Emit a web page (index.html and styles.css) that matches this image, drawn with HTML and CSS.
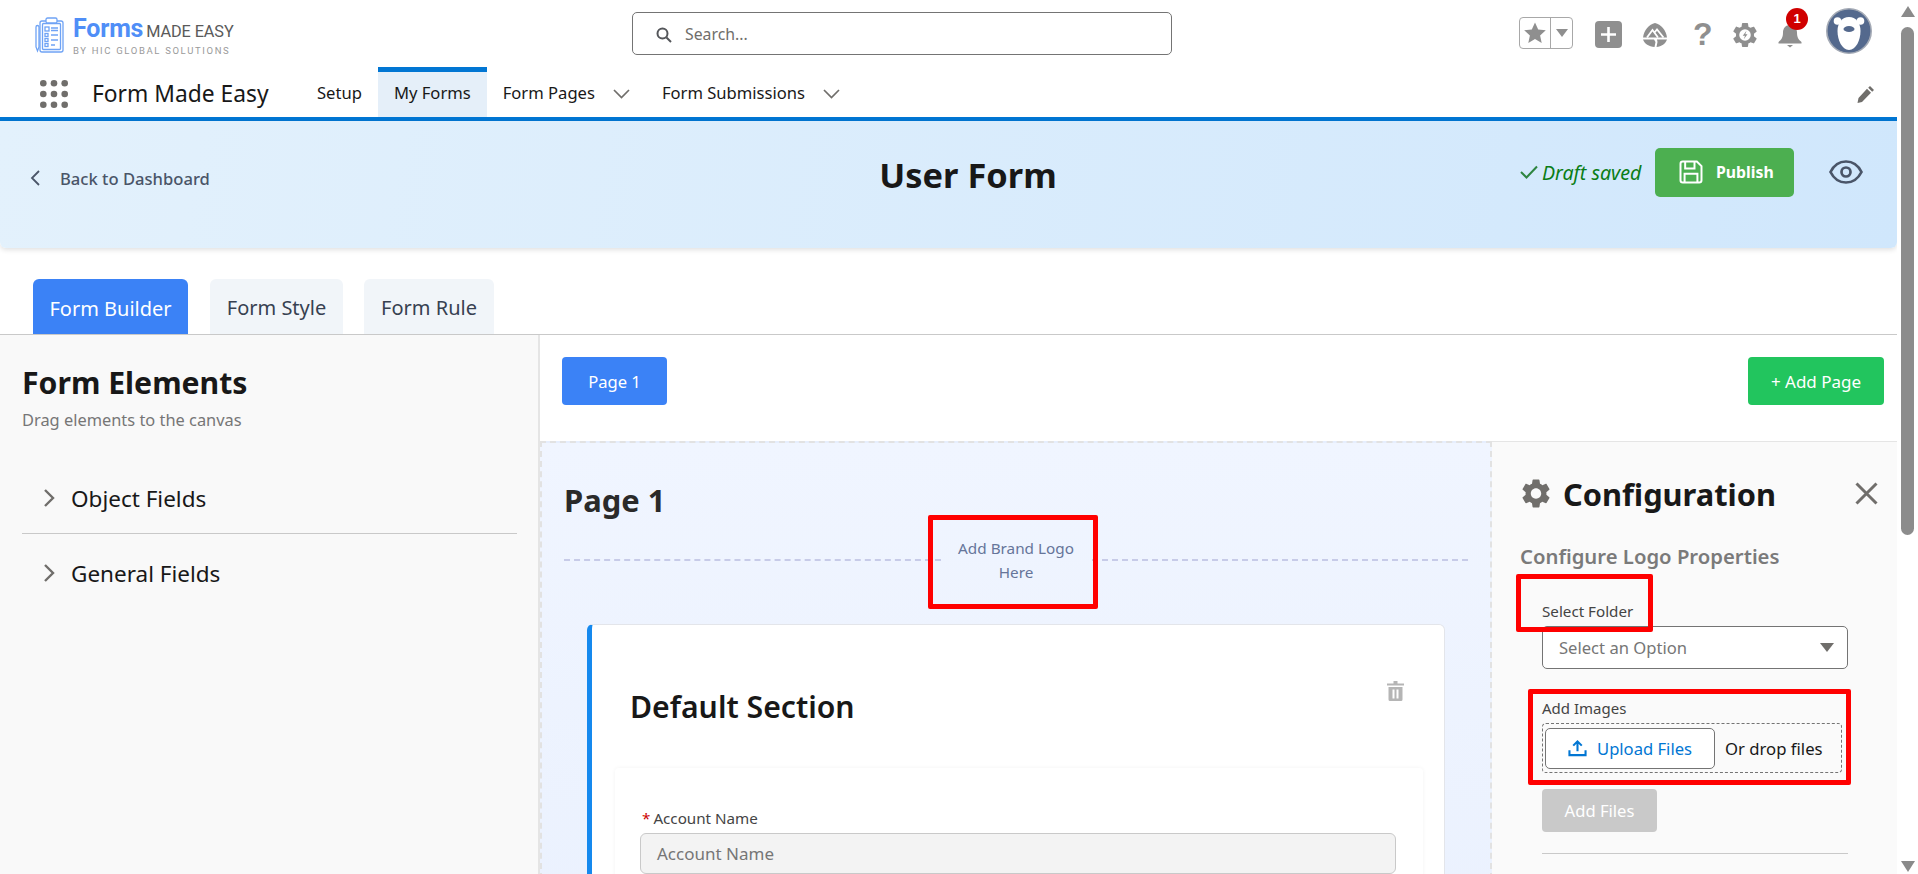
FILE: index.html
```html
<!DOCTYPE html>
<html lang="en">
<head>
<meta charset="utf-8">
<title>User Form</title>
<link rel="stylesheet" href="styles.css">
</head>
<body>
<div class="app">
  <header class="topbar">
    <div class="logo">
      <svg class="logo-icon" viewBox="0 0 30 36" fill="none" stroke="#6fa3f5" stroke-width="1.3">
        <rect x="6" y="4" width="23" height="31" rx="2"/>
        <rect x="8.5" y="6.5" width="18" height="26" rx="1"/>
        <rect x="12" y="1" width="11" height="5" rx="1.5" fill="#fff"/>
        <path d="M2 10v20l1.5 4 1.5-4V10a1.5 1.5 0 0 0-3 0z"/>
        <rect x="11" y="10" width="4" height="4"/><rect x="11" y="16.5" width="3" height="3"/><rect x="11" y="21.5" width="3" height="3"/><rect x="11" y="26.5" width="3" height="3"/>
        <path d="M17 11h7M17 13.5h7M17 18h7M17 23h7M17 28h4"/>
      </svg>
      <div class="logo-text">
        <div class="logo-main"><span class="logo-forms">Forms</span><span class="logo-made">MADE EASY</span></div>
        <div class="logo-by">BY HIC GLOBAL SOLUTIONS</div>
      </div>
    </div>
    <div class="search">
      <svg class="search-icon" viewBox="0 0 16 16" fill="none" stroke="#54565a" stroke-width="2"><circle cx="6.5" cy="6.5" r="5"/><path d="M10.5 10.5 15 15"/></svg>
      <span>Search...</span>
    </div>
    <div class="top-actions">
      <div class="fav">
        <span class="fav-star"><svg viewBox="0 0 24 24" width="24" height="24" fill="#8f8f8f"><path d="M12 1.5l3.2 7 7.6.8-5.7 5.1 1.6 7.6-6.7-3.9-6.7 3.9 1.6-7.6L1.2 9.3l7.6-.8z"/></svg></span>
        <span class="fav-drop"><svg viewBox="0 0 12 8" width="12" height="8" fill="#8f8f8f"><path d="M0 0h12L6 8z"/></svg></span>
      </div>
      <svg class="ic-add" viewBox="0 0 27 27"><rect width="27" height="27" rx="4" fill="#8f8f8f"/><path d="M13.5 6v15M6 13.5h15" stroke="#fff" stroke-width="2.6"/></svg>
      <svg class="ic-trail" viewBox="0 0 26 26" fill="#8f8f8f"><path d="M13 1C19 2.500 24 8 25 15.500H1C2 8 7 2.500 13 1z"/><path d="M1 17.500h11l1.500 2.500-1 5C7 24.500 2.500 22 1 17.500zM15 17.500h10c-1.500 4.500-5.500 7-10.500 7.500l1-5z"/><path d="M5 15.500L10.500 8l5.500 7.500M12.500 10.500L15 7.500l6.500 8" fill="none" stroke="#fff" stroke-width="1.800"/></svg>
      <span class="ic-help">?</span>
      <svg class="ic-gear" viewBox="0 0 24 24"><path fill="#8f8f8f" d="M19.14 12.94c.04-.3.06-.61.06-.94 0-.32-.02-.64-.07-.94l2.03-1.58c.18-.14.23-.41.12-.61l-1.92-3.32c-.12-.22-.37-.29-.59-.22l-2.39.96c-.5-.38-1.03-.7-1.62-.94l-.36-2.54c-.04-.24-.24-.41-.48-.41h-3.84c-.24 0-.43.17-.47.41l-.36 2.54c-.59.24-1.13.57-1.62.94l-2.39-.96c-.22-.08-.47 0-.59.22L2.74 8.87c-.12.21-.08.47.12.61l2.03 1.58c-.05.3-.09.63-.09.94s.02.64.07.94l-2.03 1.58c-.18.14-.23.41-.12.61l1.92 3.32c.12.22.37.29.59.22l2.39-.96c.5.38 1.03.7 1.62.94l.36 2.54c.05.24.24.41.48.41h3.84c.24 0 .44-.17.47-.41l.36-2.54c.59-.24 1.13-.56 1.62-.94l2.39.96c.22.08.47 0 .59-.22l1.92-3.32c.12-.22.07-.47-.12-.61l-2.01-1.58z"/><circle cx="12" cy="12" r="4.6" fill="#fff"/><path d="M13.2 8.6l-3 4h1.8l-1 2.8 3-4h-1.8z" fill="#8f8f8f"/></svg>
      <div class="bell">
        <svg viewBox="0 0 26 26" width="26" height="26" fill="#8f8f8f"><path d="M13 3c-4.5 0-7 3.5-7 7.5 0 5-1.5 7-4.5 9.500v1.500h23V20c-3-2.500-4.500-4.500-4.500-9.500C20 6.500 17.500 3 13 3z"/><path d="M10 23h6l-3 2.500z"/></svg>
        <span class="badge">1</span>
      </div>
      <svg class="avatar" viewBox="0 0 46 46"><circle cx="23" cy="23" r="22.200" fill="#54698d" stroke="#a4aab5" stroke-width="1.600"/><circle cx="11.500" cy="13" r="3.800" fill="#fff"/><circle cx="34.500" cy="13" r="3.800" fill="#fff"/><path d="M23 9c7 0 11.500 6 11.500 14 0 9-4.500 19-11.500 19s-11.500-10-11.500-19c0-8 4.500-14 11.500-14z" fill="#fff"/><ellipse cx="23" cy="21" rx="5.500" ry="3" fill="#54698d"/></svg>
    </div>
  </header>

  <nav class="navbar">
    <svg class="launcher" viewBox="0 0 28 28" fill="#706e6b">
      <circle cx="3.300" cy="3.300" r="3.300"/><circle cx="14" cy="3.300" r="3.300"/><circle cx="24.700" cy="3.300" r="3.300"/>
      <circle cx="3.300" cy="14" r="3.300"/><circle cx="14" cy="14" r="3.300"/><circle cx="24.700" cy="14" r="3.300"/>
      <circle cx="3.300" cy="24.700" r="3.300"/><circle cx="14" cy="24.700" r="3.300"/><circle cx="24.700" cy="24.700" r="3.300"/>
    </svg>
    <span class="app-name">Form Made Easy</span>
    <a class="nav-item nav-setup">Setup</a>
    <a class="nav-item nav-active">My Forms</a>
    <a class="nav-item">Form Pages<svg class="nav-chev" viewBox="0 0 17 10" fill="none" stroke="#706e6b" stroke-width="1.700"><path d="M1 1l7.500 7.500L16 1"/></svg></a>
    <a class="nav-item">Form Submissions<svg class="nav-chev" viewBox="0 0 17 10" fill="none" stroke="#706e6b" stroke-width="1.700"><path d="M1 1l7.500 7.500L16 1"/></svg></a>
    <svg class="nav-pencil" viewBox="0 0 18 18" fill="#706e6b"><path d="M13 1l4 4-1.800 1.800-4-4zM10 3.800l4 4L5 17l-4.500 1L1.500 13z"/></svg>
  </nav>

  <section class="banner">
    <a class="back">
      <svg viewBox="0 0 10 16" width="10" height="16" fill="none" stroke="#4a5568" stroke-width="1.800"><path d="M9 1L2 8l7 7"/></svg>
      <span>Back to Dashboard</span>
    </a>
    <h1 class="title">User Form</h1>
    <div class="banner-actions">
      <svg class="draft-check" viewBox="0 0 18 14" fill="none" stroke="#2e8540" stroke-width="2"><path d="M1 7l5.500 5.500L17 1.500"/></svg>
      <em class="draft">Draft saved</em>
      <button class="publish">
        <svg viewBox="0 0 24 24" width="28" height="28" fill="none" stroke="#fff" stroke-width="1.700"><path d="M3 5a2 2 0 0 1 2-2h12l4 4v12a2 2 0 0 1-2 2H5a2 2 0 0 1-2-2z"/><path d="M7 3v6h8V3M6.500 21v-7.500h11V21"/></svg>
        <span>Publish</span>
      </button>
      <svg class="eye" viewBox="0 0 34 26" fill="none" stroke="#4a5568" stroke-width="2.700"><path d="M1.500 13C5 6 10.500 2.500 17 2.500S29 6 32.500 13C29 20 23.500 23.500 17 23.500S5 20 1.500 13z"/><circle cx="17" cy="13" r="4.500"/></svg>
    </div>
  </section>

  <div class="tabs">
    <div class="tab tab-active">Form Builder</div>
    <div class="tab tab-style">Form Style</div>
    <div class="tab tab-rule">Form Rule</div>
  </div>

  <main class="workspace">
    <aside class="sidebar">
      <h2 class="side-title">Form Elements</h2>
      <p class="side-sub">Drag elements to the canvas</p>
      <div class="accordion acc-line">
        <svg viewBox="0 0 12 20" width="12" height="20" fill="none" stroke="#706e6b" stroke-width="2.400"><path d="M2 2l8 8-8 8"/></svg>
        <span>Object Fields</span>
      </div>
      <div class="accordion acc-last">
        <svg viewBox="0 0 12 20" width="12" height="20" fill="none" stroke="#706e6b" stroke-width="2.400"><path d="M2 2l8 8-8 8"/></svg>
        <span>General Fields</span>
      </div>
    </aside>

    <div class="content">
      <div class="pagebar">
        <button class="page-btn">Page 1</button>
        <button class="add-page">+ Add Page</button>
      </div>
      <div class="builder">
        <div class="canvas">
          <h2 class="page-title">Page 1</h2>
          <div class="logo-row">
            <span class="dash"></span>
            <div class="logo-slot">Add Brand Logo<br>Here</div>
            <span class="dash"></span>
            <span class="mark mark-logo"></span>
          </div>
          <div class="card">
            <div class="card-head">
              <h3 class="section-title">Default Section</h3>
              <svg class="trash" viewBox="0 0 17 20" fill="#b5b5b5"><path d="M6.500 0h4v2.500H17v2H0v-2h6.500z"/><path d="M1.500 6h14v12.500a1.500 1.500 0 0 1-1.500 1.500H3a1.500 1.500 0 0 1-1.500-1.500zM5.500 8.500v9h2v-9zm4 0v9h2v-9z" fill-rule="evenodd"/></svg>
            </div>
            <div class="field-card">
              <label class="field-label"><span class="req">*</span>Account Name</label>
              <div class="field-input">Account Name</div>
            </div>
          </div>
        </div>

        <aside class="config">
          <div class="config-head">
            <svg class="config-gear" viewBox="2.400 2 19.200 20"><path fill="#706e6b" fill-rule="evenodd" d="M19.140 12.940c.04-.3.06-.61.06-.94 0-.32-.02-.64-.07-.94l2.030-1.580c.18-.14.23-.41.12-.61l-1.920-3.320c-.12-.22-.37-.29-.59-.22l-2.390.96c-.5-.38-1.030-.7-1.620-.94l-.36-2.540c-.04-.24-.24-.41-.48-.41h-3.840c-.24 0-.43.17-.47.41l-.36 2.540c-.59.24-1.130.57-1.620.94l-2.390-.96c-.22-.08-.47 0-.59.22L2.740 8.870c-.12.21-.08.47.12.61l2.030 1.580c-.05.3-.09.63-.09.94s.02.64.07.94l-2.030 1.580c-.18.14-.23.41-.12.61l1.920 3.320c.12.22.37.29.59.22l2.390-.96c.5.38 1.030.7 1.620.94l.36 2.540c.05.24.24.41.48.41h3.840c.24 0 .44-.17.47-.41l.36-2.540c.59-.24 1.130-.56 1.620-.94l2.390.96c.22.08.47 0 .59-.22l1.920-3.320c.12-.22.07-.47-.12-.61l-2.010-1.580zM12 15.600c-1.980 0-3.600-1.620-3.600-3.600s1.620-3.600 3.600-3.600 3.600 1.620 3.600 3.600-1.620 3.600-3.600 3.600z"/></svg>
            <h2 class="config-title">Configuration</h2>
            <svg class="config-close" viewBox="0 0 23 23" fill="none" stroke="#706e6b" stroke-width="3"><path d="M1.500 1.500l20 20M21.500 1.500l-20 20"/></svg>
          </div>
          <h3 class="config-sub">Configure Logo Properties</h3>
          <div class="config-form">
            <div class="label-folder">Select Folder</div>
            <span class="mark mark-folder"></span>
            <div class="select">
              <span>Select an Option</span>
              <svg viewBox="0 0 14 9" width="14" height="9" fill="#706e6b"><path d="M0 0h14L7 9z"/></svg>
            </div>
            <div class="label-images">Add Images</div>
            <span class="mark mark-images"></span>
            <div class="dropzone">
              <button class="upload">
                <svg viewBox="0 0 20 19" width="19" height="18" fill="none" stroke="#0176d3" stroke-width="2.200"><path d="M10 13V2.500M5.500 7L10 2.500 14.500 7" /><path d="M1.500 12v5h17v-5"/></svg>
                <span>Upload Files</span>
              </button>
              <span class="drop-text">Or drop files</span>
            </div>
            <button class="add-files">Add Files</button>
            <hr class="config-hr">
          </div>
        </aside>
      </div>
    </div>
  </main>
</div>

<div class="scrollbar">
  <span class="sb-up"></span>
  <span class="sb-thumb"></span>
  <span class="sb-down"></span>
</div>
</body>
</html>
```

FILE: styles.css
```css
* { box-sizing: border-box; }
html, body { margin: 0; height: 874px; overflow: hidden; background: #fff; }
body { display: flex; font-family: "Noto Sans", "Open Sans", sans-serif; color: #181818; }
h1, h2, h3, p { margin: 0; }
button { font-family: inherit; border: 0; padding: 0; }

.app { width: 1897px; height: 874px; display: flex; flex-direction: column; flex: none; }

/* Top bar */
.topbar { height: 67px; display: flex; align-items: center; flex: none; }
.logo { width: 632px; padding-left: 34px; display: flex; align-items: center; gap: 9px; flex: none; padding-top: 3px; }
.logo-icon { width: 30px; height: 36px; }
.logo-main { display: flex; align-items: baseline; gap: 3px; line-height: 26px; white-space: nowrap; margin-top: 2px; }
.logo-forms { font: 700 25px/26px "Roboto", sans-serif; color: #4f8ef7; letter-spacing: -.2px; }
.logo-made { font: 400 16.300px/26px "Roboto", sans-serif; color: #5a5a5a; letter-spacing: -.1px; }
.logo-by { font: 400 9.500px/11px "Roboto", sans-serif; color: #9a9a9a; letter-spacing: 1.650px; white-space: nowrap; }

.search { width: 540px; height: 43px; border: 1px solid #747474; border-radius: 5px; display: flex; align-items: center; padding-left: 23px; gap: 13px; font-size: 15.800px; color: #706e6b; flex: none; }
.search-icon { width: 16px; height: 16px; margin-top: 3px; }

.top-actions { display: flex; align-items: center; margin-left: 347px; height: 67px; flex: none; }
.fav { width: 54px; height: 32px; border: 1px solid #a8a8a8; border-radius: 4px; display: flex; margin-top: -1px; }
.fav-star { width: 31px; border-right: 1px solid #a8a8a8; display: flex; align-items: center; justify-content: center; }
.fav-drop { flex: 1; display: flex; align-items: center; justify-content: center; }
.ic-add { width: 27px; height: 27px; margin-left: 22px; margin-top: 2px; }
.ic-trail { width: 26px; height: 26px; margin-left: 20px; margin-top: 2px; }
.ic-help { font: 700 32px/34px "Liberation Sans", sans-serif; color: #8f8f8f; margin-left: 25px; width: 19px; margin-top: 1px; }
.ic-gear { width: 30px; height: 30px; margin-left: 18px; margin-top: 3px; }
.bell { width: 26px; height: 26px; margin-left: 17px; position: relative; margin-top: 3px; }
.badge { position: absolute; left: 9px; top: -14px; width: 22px; height: 22px; border-radius: 50%; background: #d00000; color: #fff; font: 700 13px/22px "Liberation Sans", sans-serif; text-align: center; }
.avatar { width: 46px; height: 46px; margin-left: 23px; margin-top: -6px; }

/* Navigation */
.navbar { height: 54px; border-bottom: 4px solid #0176d3; display: flex; align-items: stretch; padding-left: 40px; flex: none; }
.launcher { width: 28px; height: 28px; align-self: center; margin-top: 3px; }
.app-name { font-size: 22.800px; line-height: 50px; margin-left: 24px; width: 225px; padding-top: 2px; white-space: nowrap; }
.nav-item { display: flex; align-items: center; font-size: 16.600px; padding: 1px 16px 0; color: #181818; white-space: nowrap; }
.nav-setup { padding-left: 0; }
.nav-active { background: #e5eff9; border-top: 5px solid #0176d3; padding-top: 0; padding-bottom: 4px; }
.nav-chev { width: 17px; height: 10px; margin-left: 18px; margin-top: 3px; }
.nav-pencil { width: 18px; height: 18px; margin-left: auto; margin-right: 22px; align-self: center; margin-top: 4px; }

/* Banner */
.banner { height: 127px; flex: none; display: flex; align-items: flex-start; padding: 26px 34px 0 30px; background: linear-gradient(100deg, #e3f1fc 0%, #d0e7fc 100%); border-radius: 0 0 6px 6px; box-shadow: 0 2px 5px rgba(0,0,0,.12); }
.back { display: flex; align-items: center; gap: 20px; width: 848px; height: 50px; font-size: 16.600px; font-weight: 500; color: #4a5568; white-space: nowrap; padding-top: 12px; }
.title { font-size: 34.400px; line-height: 50px; font-weight: 700; width: 180px; text-align: center; color: #181818; white-space: nowrap; flex: none; margin-top: 3px; }
.banner-actions { display: flex; align-items: center; height: 50px; margin-left: auto; }
.draft-check { width: 18px; height: 14px; }
.draft { font-size: 19.600px; color: #0a7d16; margin-left: 4px; width: 113px; white-space: nowrap; }
.publish { width: 139px; height: 49px; border-radius: 5px; background: #4caf50; color: #fff; display: flex; align-items: center; gap: 11px; padding-left: 22px; font-size: 15.800px; font-weight: 700; }
.eye { width: 34px; height: 26px; margin-left: 35px; }

/* Tabs */
.tabs { height: 87px; flex: none; display: flex; align-items: flex-end; padding-left: 33px; border-bottom: 1px solid #c9c9c9; }
.tab { height: 55px; border-radius: 6px 6px 0 0; background: #f1f5f9; color: #374151; font-size: 20px; line-height: 58px; text-align: center; white-space: nowrap; }
.tab-active { width: 155px; background: #3b82f6; color: #fff; line-height: 60px; }
.tab-style { width: 133px; margin-left: 22px; }
.tab-rule { width: 130px; margin-left: 21px; }

/* Workspace */
.workspace { flex: 1; display: flex; min-height: 0; overflow: hidden; }
.sidebar { width: 540px; flex: none; background: #f9f9f9; border-right: 2px solid #e5e5e5; padding: 0 22px; }
.side-title { font-size: 30.200px; line-height: 40px; font-weight: 700; margin-top: 28px; white-space: nowrap; }
.side-sub { font-size: 16.400px; line-height: 24px; color: #767676; margin-top: 5px; white-space: nowrap; }
.accordion { display: flex; align-items: center; gap: 16px; padding-left: 21px; font-size: 22.500px; white-space: nowrap; }
.acc-line { margin-top: 31px; width: 495px; height: 71px; border-bottom: 1px solid #c9c9c9; }
.acc-last { height: 78px; }

.content { flex: 1; min-width: 0; display: flex; flex-direction: column; }
.pagebar { height: 106px; flex: none; display: flex; justify-content: space-between; align-items: flex-start; padding: 22px 13px 0 22px; }
.page-btn { width: 105px; height: 48px; border-radius: 4px; background: #3b82f6; color: #fff; font-size: 16.600px; }
.add-page { width: 136px; height: 48px; border-radius: 4px; background: #22c55e; color: #fff; font-size: 17px; }

.builder { flex: 1; display: flex; min-height: 0; }
.canvas { width: 952px; flex: none; height: 900px; border: 2px dashed #e2e2e2; background: linear-gradient(180deg, #f0f5ff, #e6eefd); padding: 37px 22px 0 22px; }
.page-title { font-size: 30.900px; line-height: 40px; font-weight: 700; color: #2a2a2a; }
.logo-row { display: flex; align-items: center; height: 79px; position: relative; }
.dash { flex: 1; border-top: 2px dashed #c7cbe8; }
.logo-slot { width: 151px; text-align: center; font-size: 15.300px; line-height: 24px; color: #66759a; }
.card { margin: 25px 0 0 23px; width: 858px; height: 600px; background: #fff; border: 1px solid #e3e5ea; border-left: 5px solid #1589ee; border-radius: 6px; }
.card-head { height: 143px; display: flex; justify-content: space-between; align-items: flex-start; padding: 56px 40px 0 38px; }
.section-title { font-size: 30.200px; line-height: 40px; font-weight: 600; margin-top: 6px; }
.trash { width: 17px; height: 20px; }
.field-card { margin: 0 21px 0 23px; background: #fff; box-shadow: 0 0 4px rgba(0,0,0,.05); padding: 40px 27px 0 25px; height: 300px; border-radius: 4px; }
.field-label { display: block; font-size: 15.200px; line-height: 20px; color: #444; padding-left: 2px; }
.req { color: #c00; margin-right: 3px; }
.field-input { margin-top: 5px; height: 41px; line-height: 39px; border: 1px solid #c9c9c9; border-radius: 6px; background: #f3f3f3; padding-left: 16px; font-size: 17px; color: #767676; }

/* Configuration panel */
.config { flex: 1; min-width: 0; background: #fafafa; border-top: 1px solid #e5e5e5; }
.config-head { display: flex; align-items: center; padding: 31px 0 0 30px; height: 72px; }
.config-gear { width: 28px; height: 29px; }
.config-title { font-size: 30.800px; line-height: 40px; font-weight: 700; margin-left: 13px; white-space: nowrap; }
.config-close { width: 23px; height: 23px; margin-left: auto; margin-right: 19px; }
.config-sub { font-size: 20.300px; line-height: 30px; font-weight: 600; color: #7a7a7a; padding-left: 28px; margin-top: 27px; white-space: nowrap; }
.config-form { padding: 30px 49px 0 50px; position: relative; }
.label-folder { font-size: 15.200px; line-height: 20px; color: #444; }
.select { height: 43px; margin-top: 5px; border: 1px solid #747474; border-radius: 5px; background: #fff; display: flex; align-items: center; justify-content: space-between; padding: 0 13px 0 16px; font-size: 16.600px; color: #767676; }
.label-images { font-size: 15px; line-height: 20px; color: #444; margin-top: 29px; }
.dropzone { width: 300px; height: 50px; margin-top: 5px; border: 1px dashed #747474; border-radius: 4px; display: flex; align-items: center; padding-left: 2px; }
.upload { width: 170px; height: 41px; background: #fff; border: 1px solid #747474; border-radius: 5px; display: flex; align-items: center; gap: 10px; padding-left: 22px; color: #0176d3; font-size: 16.600px; }
.drop-text { margin-left: 10px; font-size: 16.700px; color: #181818; white-space: nowrap; }
.add-files { display: block; width: 115px; height: 43px; margin-top: 16px; border-radius: 4px; background: #c9c9c9; color: #fff; font-size: 16.600px; }
.config-hr { border: 0; border-top: 1px solid #c9c9c9; margin: 21px 0 0; }

/* Red annotation rectangles */
.mark { position: absolute; border: 5px solid #f00; border-radius: 2px; pointer-events: none; }
.mark-logo { left: 364px; top: -5px; width: 170px; height: 94px; }
.mark-folder { left: 24px; top: 3px; width: 137px; height: 58px; }
.mark-images { left: 36px; top: 118px; width: 323px; height: 96px; }

/* Scrollbar */
.scrollbar { flex: 1; height: 874px; background: #fff; display: flex; flex-direction: column; align-items: center; }
.sb-up { width: 0; height: 0; border: 7px solid transparent; border-top: 0; border-bottom: 11px solid #8a8a8a; margin-top: 6px; }
.sb-thumb { width: 13px; height: 508px; border-radius: 7px; background: #8c8c8c; margin-top: 10px; }
.sb-down { width: 0; height: 0; border: 7px solid transparent; border-bottom: 0; border-top: 11px solid #8a8a8a; margin-top: auto; margin-bottom: 2px; }
```
